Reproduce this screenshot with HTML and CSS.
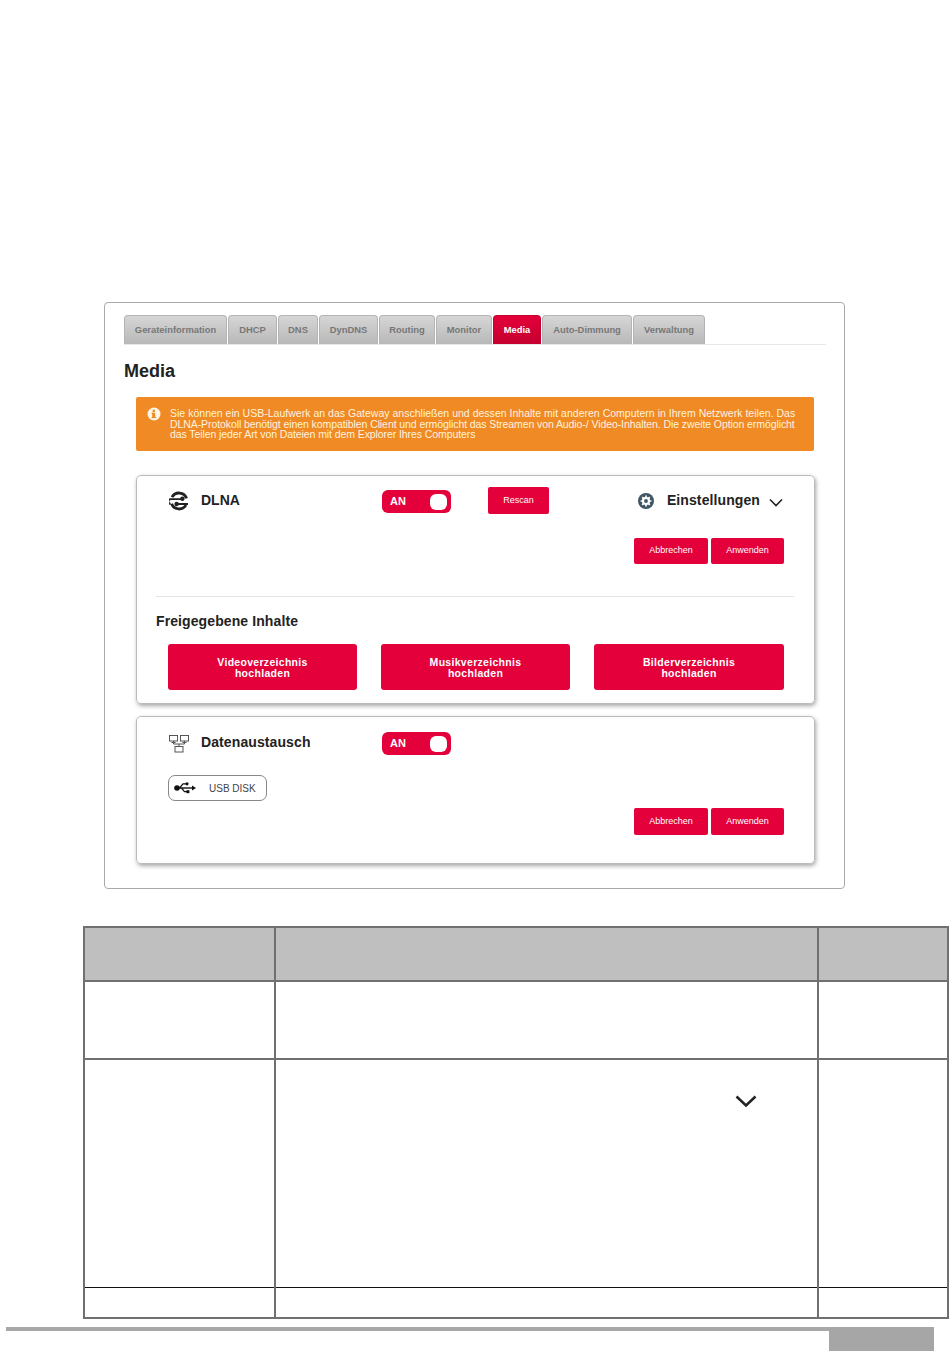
FILE: index.html
```html
<!DOCTYPE html>
<html lang="de">
<head>
    <meta charset="UTF-8">
    <meta name="viewport" content="width=device-width, initial-scale=1.0">
    <title>Media</title>
    <link rel="stylesheet" href="styles.css">
</head>
<body>
    <div class="panel">
        <div class="tabs">
            <div class="tab">Gerateinformation</div>
            <div class="tab">DHCP</div>
            <div class="tab">DNS</div>
            <div class="tab">DynDNS</div>
            <div class="tab">Routing</div>
            <div class="tab">Monitor</div>
            <div class="tab active">Media</div>
            <div class="tab">Auto-Dimmung</div>
            <div class="tab">Verwaltung</div>
        </div>
        <h1>Media</h1>
        <div class="notice">
            <svg class="notice-icon" xmlns="http://www.w3.org/2000/svg" viewBox="0 0 14 14" width="14" height="14">
                <circle cx="7" cy="7" r="6.5" fill="#fff6e8"/>
                <rect x="5.2" y="5.8" width="3" height="5.2" fill="#f08a24"/>
                <rect x="4.6" y="5.8" width="1.4" height="1.1" fill="#f08a24"/>
                <rect x="4.6" y="10" width="4.6" height="1.1" fill="#f08a24"/>
                <circle cx="6.8" cy="3.9" r="1.3" fill="#f08a24"/>
            </svg>
            <p>
                <span class="line line-wide">Sie können ein USB-Laufwerk an das Gateway anschließen und dessen Inhalte mit anderen Computern in Ihrem Netzwerk teilen. Das</span>
                <span class="line">DLNA-Protokoll benötigt einen kompatiblen Client und ermöglicht das Streamen von Audio-/ Video-Inhalten. Die zweite Option ermöglicht</span>
                <span class="line">das Teilen jeder Art von Dateien mit dem Explorer Ihres Computers</span>
            </p>
        </div>

        <div class="card card-dlna">
            <div class="card-head">
                <div class="card-title">
                    <svg class="title-icon" xmlns="http://www.w3.org/2000/svg" viewBox="0 0 20 20" width="20" height="20">
                        <path d="M3 6.2A8 8 0 0 1 17.6 7.4M17 14a8 8 0 0 1-14.4-1.2" fill="none" stroke="#222" stroke-width="2.8"/>
                        <path d="M1.2 8.2H13M19 13H8" stroke="#222" stroke-width="1.8"/>
                        <path d="M1.6 8.2a2.3 2.3 0 0 0 0 4.6" fill="none" stroke="#222" stroke-width="2"/>
                        <circle cx="13.4" cy="7.8" r="2.2" fill="#222"/>
                        <circle cx="7.6" cy="13" r="2.2" fill="#222"/>
                    </svg>
                    <span>DLNA</span>
                </div>
                <div class="toggle"><span>AN</span><i class="knob"></i></div>
                <button class="btn btn-rescan">Rescan</button>
                <div class="settings">
                    <svg xmlns="http://www.w3.org/2000/svg" viewBox="0 0 16 16" width="16" height="16">
                        <circle cx="8" cy="8" r="8" fill="#3f5564"/>
                        <circle cx="8" cy="8" r="4.1" fill="#fff"/>
                        <path d="M8 2.6v10.8M2.6 8h10.8M4.2 4.2l7.6 7.6M11.8 4.2l-7.6 7.6" stroke="#fff" stroke-width="1.7"/>
                        <circle cx="8" cy="8" r="1.9" fill="#3f5564"/>
                    </svg>
                    <span>Einstellungen</span>
                    <svg xmlns="http://www.w3.org/2000/svg" viewBox="0 0 14 9" width="14" height="9">
                        <path d="M1 1.5l6 6 6-6" fill="none" stroke="#222" stroke-width="1.6"/>
                    </svg>
                </div>
            </div>
            <div class="actions actions-dlna">
                <button class="btn btn-action">Abbrechen</button>
                <button class="btn btn-action">Anwenden</button>
            </div>
            <div class="divider"></div>
            <h2>Freigegebene Inhalte</h2>
            <div class="uploads">
                <button class="btn btn-upload">Videoverzeichnis<br>hochladen</button>
                <button class="btn btn-upload">Musikverzeichnis<br>hochladen</button>
                <button class="btn btn-upload">Bilderverzeichnis<br>hochladen</button>
            </div>
        </div>

        <div class="card card-share">
            <div class="card-head">
                <div class="card-title">
                    <svg class="title-icon title-icon-net" xmlns="http://www.w3.org/2000/svg" viewBox="0 0 20 18" width="20" height="18">
                        <g fill="none" stroke="#555" stroke-width="1">
                            <rect x="0.5" y="0.5" width="8" height="5.5"/>
                            <rect x="11.5" y="0.5" width="8" height="5.5"/>
                            <rect x="6" y="11.5" width="8" height="5.5"/>
                            <path d="M4.5 6v3M15.5 6v3M2.5 7.5h4M13.5 7.5h4M4.5 9h11M10 9v2.5"/>
                        </g>
                    </svg>
                    <span class="title-wide">Datenaustausch</span>
                </div>
                <div class="toggle"><span>AN</span><i class="knob"></i></div>
            </div>
            <div class="usb-chip">
                <svg xmlns="http://www.w3.org/2000/svg" viewBox="0 0 22 14" width="22" height="14">
                    <circle cx="3" cy="7" r="2.8" fill="#111"/>
                    <path d="M3 7h16" stroke="#111" stroke-width="1.4"/>
                    <path d="M22 7l-4-2.4v4.8z" fill="#111"/>
                    <path d="M5.5 7l3.5-4.2h3M7.5 7l3 3.6h2.5" fill="none" stroke="#111" stroke-width="1.2"/>
                    <circle cx="13" cy="2.8" r="1.6" fill="#111"/>
                    <rect x="12.4" y="9.2" width="3" height="3" fill="#111"/>
                </svg>
                <span>USB DISK</span>
            </div>
            <div class="actions actions-share">
                <button class="btn btn-action">Abbrechen</button>
                <button class="btn btn-action">Anwenden</button>
            </div>
        </div>
    </div>

    <table class="spec">
        <tr class="row-head"><th class="col-a"></th><th class="col-b"></th><th class="col-c"></th></tr>
        <tr class="row-one"><td></td><td></td><td></td></tr>
        <tr class="row-two">
            <td></td>
            <td class="chevron-cell">
                <svg xmlns="http://www.w3.org/2000/svg" viewBox="0 0 22 13" width="22" height="13">
                    <path d="M1.5 1.5L11 10.5l9.5-9" fill="none" stroke="#222" stroke-width="2.5"/>
                </svg>
            </td>
            <td></td>
        </tr>
        <tr class="row-three"><td></td><td></td><td></td></tr>
    </table>

    <div class="page-foot">
        <div class="foot-bar"></div>
        <div class="foot-box"></div>
    </div>
</body>
</html>
```

FILE: styles.css
```css
body {
    font-family: "Liberation Sans", Arial, sans-serif;
    background: #fff;
    margin: 0;
    padding: 302px 0 0;
    color: #222;
}

.panel {
    box-sizing: border-box;
    width: 741px;
    height: 587px;
    margin-left: 104px;
    padding: 12px 19px 0;
    border: 1px solid #aaa;
    border-radius: 4px;
}

.tabs {
    display: grid;
    grid-template-columns: 103px 49px 40px 59px 56px 56px 48px 90px 72px;
    gap: 1px;
    height: 29px;
    border-bottom: 1px solid #e8e8e8;
    margin-right: -1px;
}

.tab {
    line-height: 27px;
    text-align: center;
    font-size: 9.4px;
    font-weight: bold;
    color: #777;
    background: linear-gradient(to bottom, #d6d6d6, #b8b8b8);
    border: 1px solid #b4b4b4;
    border-bottom: none;
    border-radius: 4px 4px 0 0;
    box-sizing: border-box;
}

.tab.active {
    color: #fff;
    background: linear-gradient(to bottom, #e4003a, #c4002f);
    border-color: #c4002f;
}

h1 {
    margin: 15px 0 15px;
    font-size: 18px;
    line-height: 22px;
    font-weight: bold;
    color: #222;
}

.notice {
    display: flex;
    gap: 9px;
    width: 678px;
    height: 54px;
    box-sizing: border-box;
    margin-left: 12px;
    padding: 11px 11px 0;
    background: #f08a24;
    border-radius: 2px;
}

.notice-icon {
    flex: none;
    margin-top: -1px;
}

.notice p {
    margin: 0;
    color: #fff3df;
    font-size: 10.5px;
    line-height: 10.5px;
    letter-spacing: -0.085px;
    white-space: nowrap;
}

.line {
    display: block;
}

.line-wide {
    letter-spacing: 0.015px;
}

.card {
    box-sizing: border-box;
    width: 679px;
    margin-left: 12px;
    padding: 11px 30px 0 31px;
    border: 1px solid #bbb;
    border-radius: 5px;
    box-shadow: 1px 2px 4px rgba(0, 0, 0, 0.35);
}

.card-dlna {
    height: 229px;
    margin-top: 24px;
}

.card-share {
    height: 148px;
    margin-top: 12px;
    padding-top: 12px;
}

.card-head {
    display: grid;
    grid-template-columns: 214px 106px 1fr auto;
    align-items: center;
    height: 27px;
}

.card-title {
    display: flex;
    align-items: center;
    gap: 12px;
    padding-left: 1px;
    font-size: 14px;
    font-weight: bold;
    margin-top: -2px;
}

.title-icon {
    flex: none;
    margin-top: 2px;
}

.title-icon-net {
    margin-top: 5px;
}

.title-wide {
    letter-spacing: 0.1px;
}

.toggle {
    display: flex;
    align-items: center;
    justify-content: space-between;
    box-sizing: border-box;
    width: 69px;
    height: 23px;
    margin-top: 2px;
    padding: 0 4px 0 8px;
    background: #e4003a;
    border-radius: 6px;
    color: #fff;
    font-size: 11px;
    font-weight: bold;
}

.toggle span {
    margin-bottom: 2px;
}

.knob {
    width: 17px;
    height: 16px;
    background: #fff;
    border-radius: 6px;
}

.btn {
    border: none;
    padding: 0;
    background: #e4003a;
    color: #fff;
    font-family: inherit;
    border-radius: 2px;
    cursor: pointer;
}

.btn-rescan {
    width: 61px;
    height: 27px;
    padding-bottom: 2px;
    font-size: 9px;
}

.settings {
    display: flex;
    align-items: center;
    gap: 13px;
    margin-right: 1px;
    font-size: 14px;
    font-weight: bold;
    letter-spacing: 0.1px;
}

.settings span {
    margin-bottom: 2px;
}

.settings svg:last-child {
    margin-left: -4px;
    margin-top: 3px;
}

.actions {
    display: flex;
    justify-content: flex-end;
    gap: 3px;
}

.actions-dlna {
    margin-top: 24px;
}

.actions-share {
    margin-top: 7px;
}

.btn-action {
    width: 74px;
    height: 26px;
    padding-bottom: 2px;
    font-size: 9px;
}

.btn-action:last-child {
    width: 73px;
}

.actions-share .btn-action {
    height: 27px;
}

.divider {
    height: 1px;
    margin: 32px -10px 0 -12px;
    background: #e4e4e4;
}

h2 {
    margin: 15px 0 14px -12px;
    font-size: 14px;
    line-height: 18px;
    font-weight: bold;
    letter-spacing: 0.1px;
    color: #222;
}

.uploads {
    display: grid;
    grid-template-columns: 189px 189px 190px;
    gap: 24px;
}

.btn-upload {
    height: 46px;
    padding-top: 2px;
    font-size: 10.5px;
    line-height: 11px;
    font-weight: bold;
    letter-spacing: 0.3px;
    border-radius: 3px;
}

.usb-chip {
    display: flex;
    align-items: center;
    gap: 13px;
    box-sizing: border-box;
    width: 99px;
    height: 26px;
    margin-top: 19px;
    padding-left: 5px;
    border: 1px solid #888;
    border-radius: 7px;
    font-size: 10px;
    color: #444;
}

.spec {
    width: 866px;
    margin: 37px 0 0 83px;
    border-collapse: collapse;
    table-layout: fixed;
}

.spec th,
.spec td {
    padding: 0;
    border: 2px solid #707070;
}

.spec th {
    background: #bfbfbf;
}

.spec .row-two td {
    border-bottom: 1px solid #111;
}

.spec .row-three td {
    border-top: 1px solid #111;
}

.col-a {
    width: 189px;
}

.col-c {
    width: 128px;
}

.row-head {
    height: 54px;
}

.row-one {
    height: 78px;
}

.row-two {
    height: 228px;
}

.row-three {
    height: 31px;
}

.spec .chevron-cell {
    vertical-align: top;
    text-align: right;
    padding: 34px 60px 0 0;
}

.page-foot {
    display: flex;
    align-items: flex-start;
    width: 928px;
    margin: 8px 0 0 6px;
}

.foot-bar {
    flex: 1;
    height: 4px;
    background: #a8a8a8;
}

.foot-box {
    width: 105px;
    height: 24px;
    background: #a6a6a6;
}
```
